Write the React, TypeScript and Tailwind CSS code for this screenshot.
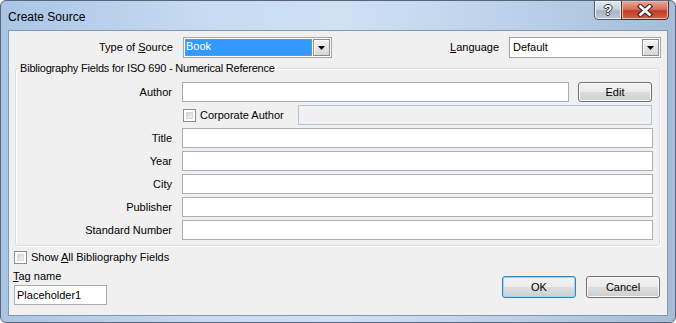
import React from 'react';

const ui = { fontFamily: '"Liberation Sans", Arial, sans-serif' };

function Arrow() {
  return (
    <svg width="7" height="4" viewBox="0 0 7 4">
      <path d="M0 0h7L3.5 4z" fill="#000" />
    </svg>
  );
}

function Combo({ value, width, focused }: { value: string; width: string; focused?: boolean }) {
  return (
    <div className={`${width} h-[21px] flex border border-[#a5a5a5] bg-white p-[1px]`}>
      <div className="flex-1 pr-[1px]">
        {focused ? (
          <div className="h-full bg-[#3399ff] text-white pl-[1px] leading-[15px] outline-1 outline-dotted outline-[#c8894a] -outline-offset-1">
            {value}
          </div>
        ) : (
          <div className="h-full pl-[2px] leading-[16px] text-black">{value}</div>
        )}
      </div>
      <div className="w-[17px] h-full flex items-center justify-center border border-[#8a8a8a] bg-[linear-gradient(#f3f3f3,#e6e6e6_50%,#d6d6d6)] shadow-[inset_1px_1px_0_#ffffff]">
        <Arrow />
      </div>
    </div>
  );
}

function Checkbox() {
  return (
    <div className="w-[13px] h-[13px] border border-[#8e8f8f] bg-white p-[2px]">
      <div className="w-full h-full bg-[linear-gradient(135deg,#cbcfd5,#f4f4f4)] border border-[#dadada]" />
    </div>
  );
}

function Button({ label, width, height, primary }: { label: string; width: string; height: string; primary?: boolean }) {
  return (
    <div
      className={`${width} ${height} rounded-[3px] border flex items-center justify-center text-black bg-[linear-gradient(#f2f2f2,#ebebeb_48%,#dddddd_52%,#cfcfcf)] ${
        primary ? 'border-[#3c7fb1] shadow-[inset_0_0_0_1px_#94d9fb]' : 'border-[#707070] shadow-[inset_0_0_0_1px_#fbfbfb]'
      }`}
    >
      {label}
    </div>
  );
}

function Field({ label }: { label: string }) {
  return (
    <div className="flex items-center h-[20px]">
      <div className="w-[156px] text-right">{label}</div>
      <div className="ml-[10px] flex-1 h-full border border-[#abadb3] bg-white" />
    </div>
  );
}

export default function App() {
  return (
    <div
      style={ui}
      className="w-[676px] h-[323px] relative overflow-hidden rounded-[6px] border border-[#56677c] bg-[linear-gradient(90deg,#aac5e4,#c6dbf1_30%,#cfe1f3_50%,#bcd2ea_75%,#a4bdd9)] text-[11px] text-black"
    >
      {/* Title bar */}
      <div className="h-[29px] flex items-start">
        <div className="pl-[7px] pt-[7px] text-[12px] text-black">Create Source</div>
        <div className="ml-auto mr-[6px] flex">
          <div className="w-[28px] h-[20px] -mt-px flex items-center justify-center rounded-bl-[4px] border border-[#4d5d70] bg-[linear-gradient(#e4eaf1,#c9d3de_45%,#a8b7c7_55%,#b9c7d6)] shadow-[inset_0_0_0_1px_#eef3f8] text-[14px] font-bold text-white [text-shadow:1px_0_0_#2a3644,-1px_0_0_#2a3644,0_1px_0_#2a3644,0_-1px_0_#2a3644]">
            ?
          </div>
          <div className="w-[48px] h-[20px] -mt-px -ml-px flex items-center justify-center rounded-br-[4px] border border-[#5a2a22] bg-[linear-gradient(#e8a898,#d8705c_45%,#c23a23_55%,#d2624b)] shadow-[inset_0_0_0_1px_#eebbae]">
            <svg width="16" height="13" viewBox="0 0 16 13">
              <path d="M3.5 2.5l9 8M12.5 2.5l-9 8" stroke="#3a2424" strokeWidth="5" strokeLinecap="square" />
              <path d="M3.5 2.5l9 8M12.5 2.5l-9 8" stroke="#ffffff" strokeWidth="2.8" strokeLinecap="square" />
            </svg>
          </div>
        </div>
      </div>

      {/* Client area */}
      <div className="ml-[7px] w-[660px] h-[286px] border border-[#8497ae] bg-[#f0f0f0] flex flex-col">
        {/* Source type / language */}
        <div className="mt-[6px] flex items-center">
          <div className="w-[164px] text-right">
            Type of <span className="underline">S</span>ource
          </div>
          <div className="ml-[10px]">
            <Combo value="Book" width="w-[149px]" focused />
          </div>
          <div className="ml-auto">
            <span className="underline">L</span>anguage
          </div>
          <div className="ml-[10px] mr-[6px]">
            <Combo value="Default" width="w-[152px]" />
          </div>
        </div>

        {/* Group box */}
        <fieldset className="mt-[4px] ml-[6px] mr-[7px] border border-[#d5dfe5] rounded-[3px] shadow-[1px_1px_0_#ffffff,inset_1px_1px_0_#ffffff] pt-[7px] pb-[5px] pr-[6px] flex flex-col gap-[3px]">
          <legend className="ml-[2px] px-[2px] leading-[13px] tracking-[-0.2px]">
            Bibliography Fields for ISO 690 - Numerical Reference
          </legend>
          <div className="flex items-center h-[20px]">
            <div className="w-[156px] text-right">Author</div>
            <div className="ml-[10px] flex-1 h-full border border-[#abadb3] bg-white" />
            <div className="ml-[9px] mr-[1px]">
              <Button label="Edit" width="w-[74px]" height="h-[20px]" />
            </div>
          </div>
          <div className="flex items-center h-[20px]">
            <div className="ml-[167px]">
              <Checkbox />
            </div>
            <div className="ml-[4px] w-[98px]">Corporate Author</div>
            <div className="flex-1 h-full mr-[1px] border border-[#adc6e0] bg-[#f0f0f0]" />
          </div>
          <Field label="Title" />
          <Field label="Year" />
          <Field label="City" />
          <Field label="Publisher" />
          <Field label="Standard Number" />
        </fieldset>

        {/* Bottom */}
        <div className="flex items-start mt-[4px] pl-[5px] pr-[7px]">
          <div className="flex flex-col">
            <div className="flex items-center h-[14px]">
              <Checkbox />
              <div className="ml-[4px]">
                Show <span className="underline">A</span>ll Bibliography Fields
              </div>
            </div>
            <div className="mt-[5px] -ml-px leading-[14px]">
              <span className="underline">T</span>ag name
            </div>
            <div className="mt-[2px] w-[93px] h-[20px] border border-[#abadb3] bg-white pl-[2px] leading-[18px]">
              Placeholder1
            </div>
          </div>
          <div className="ml-auto mt-[26px] flex gap-[10px]">
            <Button label="OK" width="w-[74px]" height="h-[22px]" primary />
            <Button label="Cancel" width="w-[74px]" height="h-[22px]" />
          </div>
        </div>
      </div>
    </div>
  );
}
